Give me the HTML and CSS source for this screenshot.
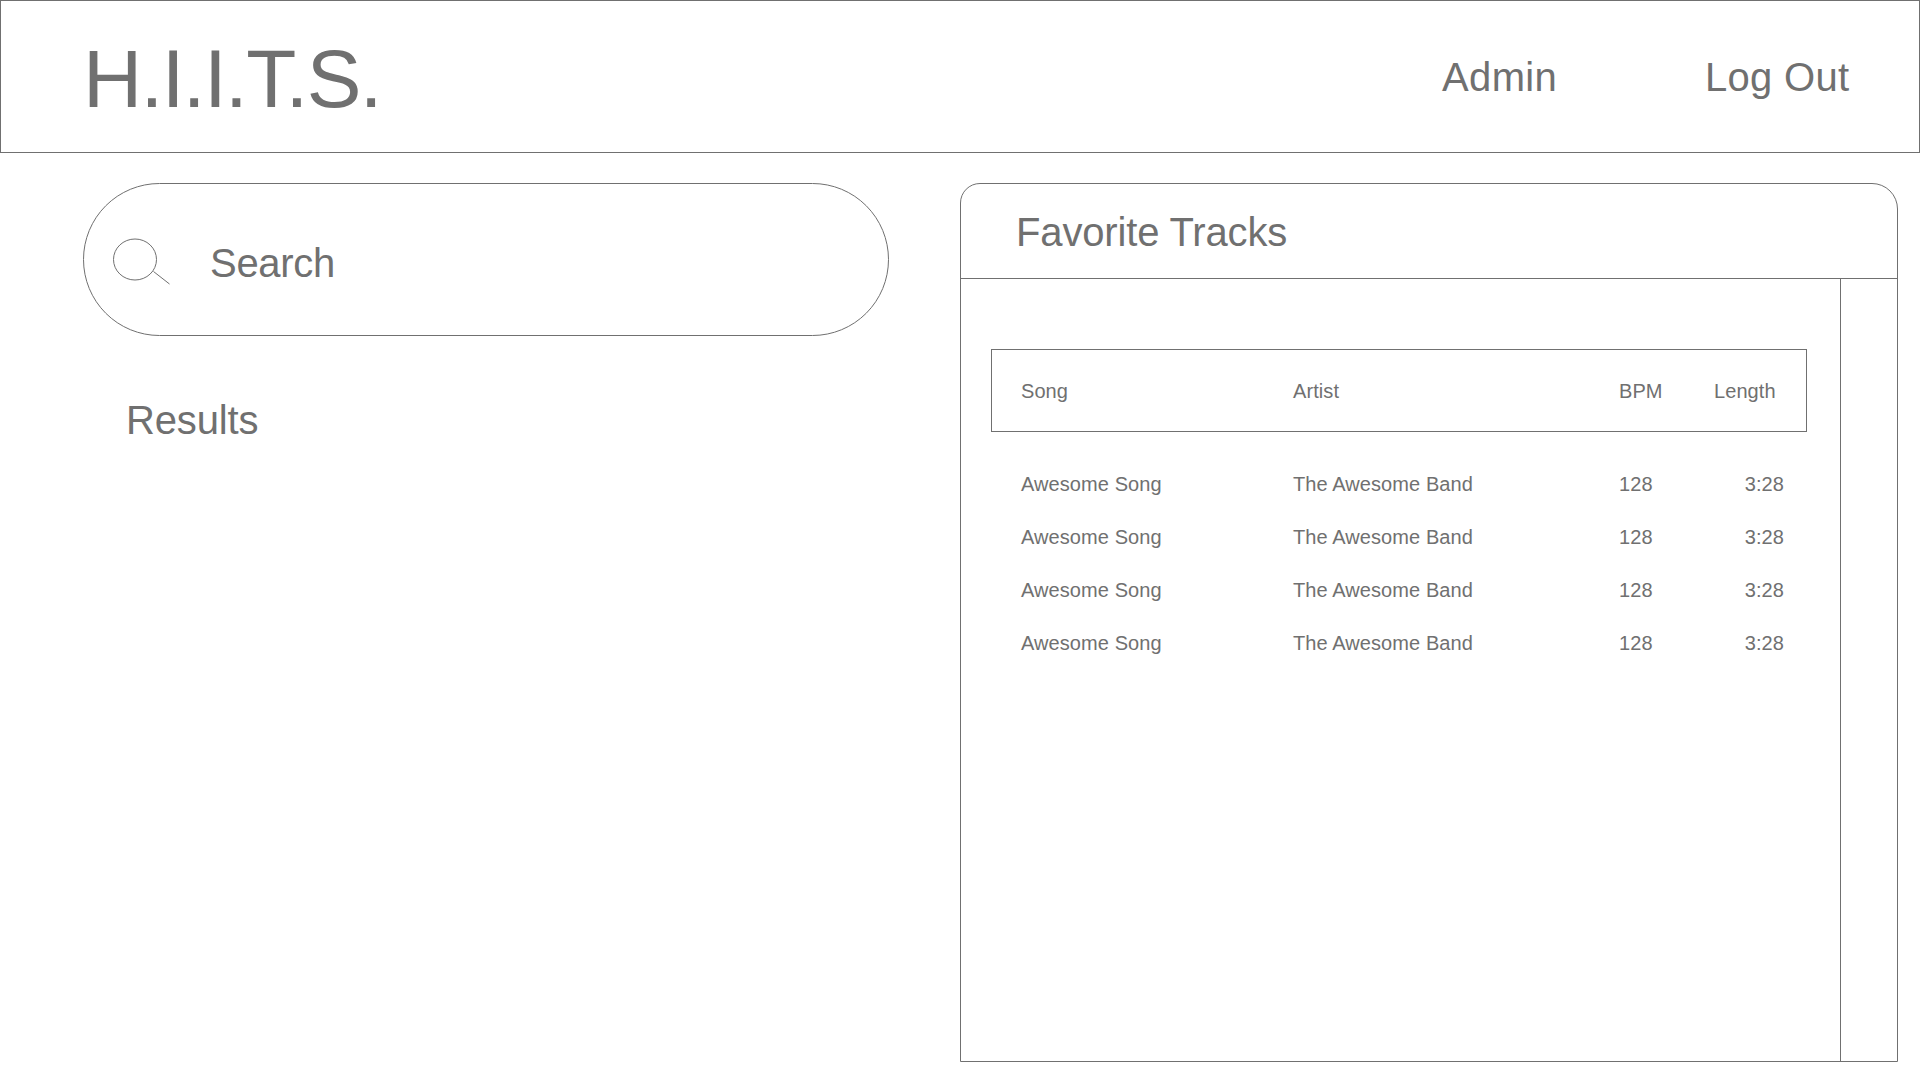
FILE: index.html
```html
<!DOCTYPE html>
<html lang="en">
<head>
<meta charset="utf-8">
<title>H.I.I.T.S.</title>
<link rel="stylesheet" href="styles.css">
</head>
<body>
<header class="topbar">
  <h1 class="brand">H.I.I.T.S.</h1>
  <nav class="nav">
    <a class="nav-admin">Admin</a>
    <a class="nav-logout">Log Out</a>
  </nav>
</header>
<main class="main">
  <section class="finder">
    <div class="search">
      <svg class="search-icon" width="60" height="50" viewBox="0 0 60 50" fill="none" stroke="#707070">
        <ellipse cx="22" cy="21.5" rx="21.5" ry="20.5"/>
        <path d="M40.5 33.5 56.5 46"/>
      </svg>
      <span class="search-label">Search</span>
    </div>
    <h2 class="results">Results</h2>
  </section>
  <section class="panel">
    <div class="panel-head"><h2 class="panel-title">Favorite Tracks</h2></div>
    <div class="panel-body">
      <div class="tracks">
        <div class="row row-head"><span>Song</span><span>Artist</span><span>BPM</span><span>Length</span></div>
        <div class="rows">
          <div class="row"><span>Awesome Song</span><span>The Awesome Band</span><span>128</span><span class="length">3:28</span></div>
          <div class="row"><span>Awesome Song</span><span>The Awesome Band</span><span>128</span><span class="length">3:28</span></div>
          <div class="row"><span>Awesome Song</span><span>The Awesome Band</span><span>128</span><span class="length">3:28</span></div>
          <div class="row"><span>Awesome Song</span><span>The Awesome Band</span><span>128</span><span class="length">3:28</span></div>
        </div>
      </div>
      <div class="scrollbar"></div>
    </div>
  </section>
</main>
</body>
</html>
```
FILE: styles.css
```css
* { box-sizing: border-box; }
body {
  margin: 0;
  height: 1080px;
  overflow: hidden;
  background: #fff;
  color: #707070;
  font-family: "Liberation Sans", Arial, sans-serif;
  font-size: 20px;
}
h1, h2 { margin: 0; font-weight: 400; }

.topbar {
  display: flex;
  align-items: center;
  justify-content: space-between;
  height: 153px;
  padding: 1px 68px 0 82px;
  border: 1px solid #707070;
}
.brand { padding-top: 3px; font-size: 82px; line-height: 92px; letter-spacing: -1.65px; }
.nav { display: flex; font-size: 40px; line-height: 46px; }
.nav-admin { width: 263px; letter-spacing: 0.35px; }
.nav-logout { width: 146px; letter-spacing: 0.3px; white-space: nowrap; }

.main { display: flex; padding: 30px 22px 0 83px; }
.finder { width: 806px; margin-right: 71px; }
.search {
  display: flex;
  align-items: center;
  height: 153px;
  padding-left: 29px;
  border: 1px solid #707070;
  border-radius: 77px;
}
.search-icon { margin-top: 7px; }
.search-label {
  margin-left: 37px;
  padding-top: 7px;
  font-size: 40px;
  line-height: 46px;
  letter-spacing: -0.3px;
}
.results {
  margin: 61px 0 0 43px;
  font-size: 40px;
  line-height: 46px;
  letter-spacing: -0.15px;
}

.panel {
  display: flex;
  flex-direction: column;
  width: 938px;
  height: 879px;
  border: 1px solid #707070;
  border-radius: 20px 26px 0 0;
}
.panel-head {
  display: flex;
  align-items: center;
  height: 95px;
  padding: 2px 0 0 55px;
  border-bottom: 1px solid #707070;
}
.panel-title { font-size: 40px; line-height: 46px; letter-spacing: -0.15px; }
.panel-body { display: flex; flex: 1; }
.tracks { flex: 1; padding: 70px 33px 0 30px; }
.scrollbar { width: 57px; border-left: 1px solid #707070; }

.row {
  display: grid;
  grid-template-columns: 272px 326px 95px 1fr;
  align-items: center;
  height: 53px;
  padding: 0 23px 0 30px;
  letter-spacing: 0.08px;
}
.row-head {
  height: 83px;
  padding: 1px 21px 0 29px;
  border: 1px solid #707070;
}
.rows { padding-top: 26px; }
.length { text-align: right; }
```
